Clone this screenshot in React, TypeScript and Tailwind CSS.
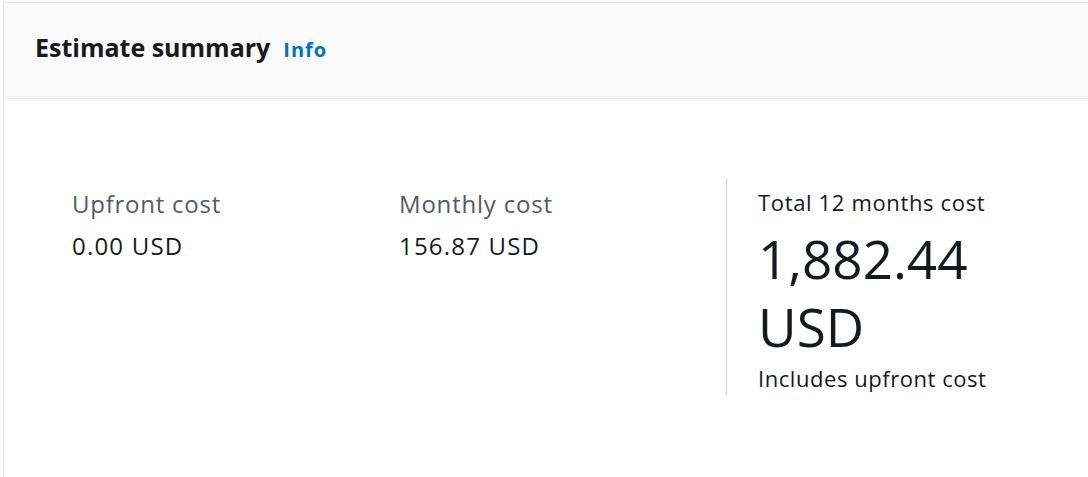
export default function App() {
  return (
    <div className="h-[477px] w-[1088px] overflow-hidden bg-white pt-[2px] pl-[3px]" style={{ fontFamily: '"Open Sans", "Noto Sans", sans-serif' }}>
      <div className="h-full border-t border-l border-[#e3e6e6] bg-white">
        <div className="box-border flex h-[96px] items-baseline gap-[13px] border-b border-[#eaeded] bg-[#fafafa] pt-[27px] pl-[31px]">
          <h2 className="text-[25px] leading-[34px] font-bold text-[#16191f]">Estimate summary</h2>
          <a className="text-[20px] leading-[34px] font-bold tracking-[1px] text-[#0073bb]">Info</a>
        </div>
        <div className="grid grid-cols-[327px_327px_1fr] pt-[79px] pl-[68px]">
          <div className="pt-[6px]">
            <div className="text-[24px] leading-[40px] tracking-[0.75px] text-[#545b64]">Upfront cost</div>
            <div className="mt-[2px] text-[24px] leading-[40px] tracking-[1.2px] text-[#16191f]">0.00 USD</div>
          </div>
          <div className="pt-[6px]">
            <div className="text-[24px] leading-[40px] tracking-[0.8px] text-[#545b64]">Monthly cost</div>
            <div className="mt-[2px] text-[24px] leading-[40px] tracking-[1.2px] text-[#16191f]">156.87 USD</div>
          </div>
          <div className="h-[218px] border-l border-[#d5dbdb] pt-[7px] pl-[31px]">
            <div className="mb-[6px] text-[22px] leading-[34px] tracking-[0.65px] text-[#16191f]">Total 12 months cost</div>
            <div className="max-w-[250px] text-[53px] leading-[68px] text-[#16191f]">1,882.44 USD</div>
            <div className="text-[22px] leading-[34px] tracking-[0.55px] text-[#16191f]">Includes upfront cost</div>
          </div>
        </div>
      </div>
    </div>
  );
}
